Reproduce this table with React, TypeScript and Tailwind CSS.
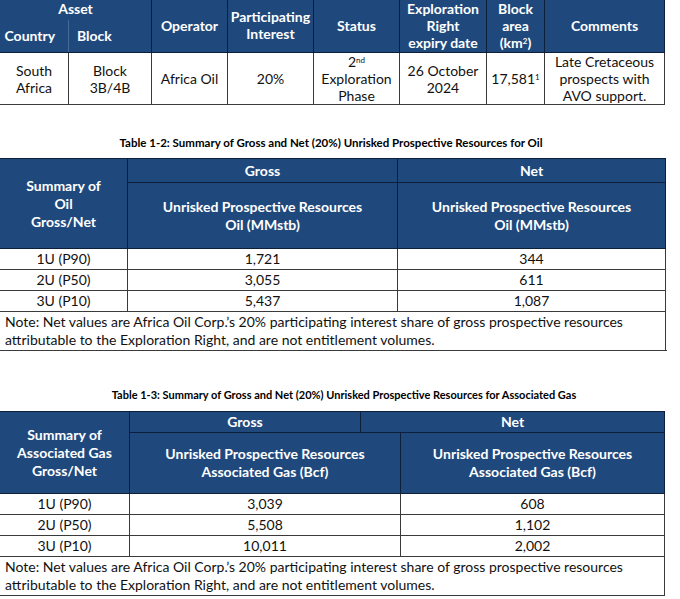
import React from 'react';

const HEAD = 'bg-[#1f497d] text-white font-bold';
const hb = 'border border-[#0e1f3a]';
const bb = 'border border-[#3a3a3a]';

type Row = { label: string; gross: string; net: string };

const Note = () => (
  <tr>
    <td colSpan={4} className={`${bb} px-[5px] py-[1px] text-left leading-[18px]`}>
      Note: Net values are Africa Oil Corp.’s 20% participating interest share of gross prospective resources
      attributable to the Exploration Right, and are not entitlement volumes.
    </td>
  </tr>
);

const DataRows = ({ rows, split }: { rows: Row[]; split: boolean }) => (
  <>
    {rows.map((r) => (
      <tr key={r.label} className="h-[21px]">
        <td className={`${bb} text-center`}>{r.label}</td>
        <td colSpan={split ? 2 : 1} className={`${bb} text-center`}>{r.gross}</td>
        <td className={`${bb} text-center`}>{r.net}</td>
      </tr>
    ))}
  </>
);

export default function App() {
  const oil: Row[] = [
    { label: '1U (P90)', gross: '1,721', net: '344' },
    { label: '2U (P50)', gross: '3,055', net: '611' },
    { label: '3U (P10)', gross: '5,437', net: '1,087' },
  ];
  const gas: Row[] = [
    { label: '1U (P90)', gross: '3,039', net: '608' },
    { label: '2U (P50)', gross: '5,508', net: '1,102' },
    { label: '3U (P10)', gross: '10,011', net: '2,002' },
  ];

  return (
    <div className="w-[680px] h-[599px] bg-white overflow-hidden text-[14px] text-[#111] font-['Lato','Open_Sans',sans-serif]">
      {/* Table 1-1 */}
      <table className="table-fixed border-collapse w-[665px] -ml-[1px] -mt-[3px] leading-[17px]">
        <colgroup>
          <col className="w-[69px]" />
          <col className="w-[83px]" />
          <col className="w-[76px]" />
          <col className="w-[86px]" />
          <col className="w-[86px]" />
          <col className="w-[87px]" />
          <col className="w-[58px]" />
          <col className="w-[120px]" />
        </colgroup>
        <thead className={HEAD}>
          <tr className="h-[22px]">
            <th colSpan={2} className={`${hb} border-b-0 text-center`}>Asset</th>
            <th rowSpan={2} className={`${hb} text-center`}>Operator</th>
            <th rowSpan={2} className={`${hb} text-center`}>Participating<br />Interest</th>
            <th rowSpan={2} className={`${hb} text-center`}>Status</th>
            <th rowSpan={2} className={`${hb} text-center`}>Exploration<br />Right<br />expiry date</th>
            <th rowSpan={2} className={`${hb} text-center`}>Block<br />area<br />(km<sup className="text-[8px]">2</sup>)</th>
            <th rowSpan={2} className={`${hb} text-center`}>Comments</th>
          </tr>
          <tr className="h-[33px]">
            <th className="border-b border-[#0e1f3a] text-left pl-[5px] font-bold">Country</th>
            <th className="border-b border-l border-[#0e1f3a] border-l-[#4a6a96] text-left pl-[8px] font-bold">Block</th>
          </tr>
        </thead>
        <tbody>
          <tr className="h-[51px]">
            <td className={`${bb} text-center`}>South<br />Africa</td>
            <td className={`${bb} text-center`}>Block<br />3B/4B</td>
            <td className={`${bb} text-center`}>Africa Oil</td>
            <td className={`${bb} text-center`}>20%</td>
            <td className={`${bb} text-center`}>2<sup className="text-[8px]">nd</sup><br />Exploration<br />Phase</td>
            <td className={`${bb} text-center`}>26 October<br />2024</td>
            <td className={`${bb} text-center`}>17,581<sup className="text-[8px]">1</sup></td>
            <td className={`${bb} text-center`}>Late Cretaceous<br />prospects with<br />AVO support.</td>
          </tr>
        </tbody>
      </table>

      <div className="mt-[31px] mb-[8px] pr-[18px] text-center text-[11.5px] leading-[14px] font-bold text-black">
        Table 1-2: Summary of Gross and Net (20%) Unrisked Prospective Resources for Oil
      </div>

      {/* Table 1-2 */}
      <table className="table-fixed border-collapse w-[666px] -ml-[1px] leading-[18px]">
        <colgroup>
          <col className="w-[128px]" />
          <col className="w-[270px]" />
          <col className="w-[268px]" />
        </colgroup>
        <thead className={HEAD}>
          <tr className="h-[24px]">
            <th rowSpan={2} className={`${hb} text-center`}>Summary of<br />Oil<br />Gross/Net</th>
            <th className={`${hb} text-center`}>Gross</th>
            <th className={`${hb} text-center`}>Net</th>
          </tr>
          <tr className="h-[66px]">
            <th className={`${hb} text-center`}>Unrisked Prospective Resources<br />Oil (MMstb)</th>
            <th className={`${hb} text-center`}>Unrisked Prospective Resources<br />Oil (MMstb)</th>
          </tr>
        </thead>
        <tbody>
          <DataRows rows={oil} split={false} />
          <Note />
        </tbody>
      </table>

      <div className="mt-[37px] mb-[9px] pl-[8px] text-center text-[11px] leading-[14px] font-bold text-black">
        Table 1-3: Summary of Gross and Net (20%) Unrisked Prospective Resources for Associated Gas
      </div>

      {/* Table 1-3 */}
      <table className="table-fixed border-collapse w-[665px] -ml-[1px] leading-[18px]">
        <colgroup>
          <col className="w-[130px]" />
          <col className="w-[231px]" />
          <col className="w-[40px]" />
          <col className="w-[264px]" />
        </colgroup>
        <thead className={HEAD}>
          <tr className="h-[21px]">
            <th rowSpan={2} className={`${hb} text-center`}>Summary of<br />Associated Gas<br />Gross/Net</th>
            <th className={`${hb} text-center`}>Gross</th>
            <th colSpan={2} className={`${hb} text-center`}>Net</th>
          </tr>
          <tr className="h-[61px]">
            <th colSpan={2} className={`${hb} text-center`}>Unrisked Prospective Resources<br />Associated Gas (Bcf)</th>
            <th className={`${hb} text-center`}>Unrisked Prospective Resources<br />Associated Gas (Bcf)</th>
          </tr>
        </thead>
        <tbody>
          <DataRows rows={gas} split={true} />
          <Note />
        </tbody>
      </table>
    </div>
  );
}
